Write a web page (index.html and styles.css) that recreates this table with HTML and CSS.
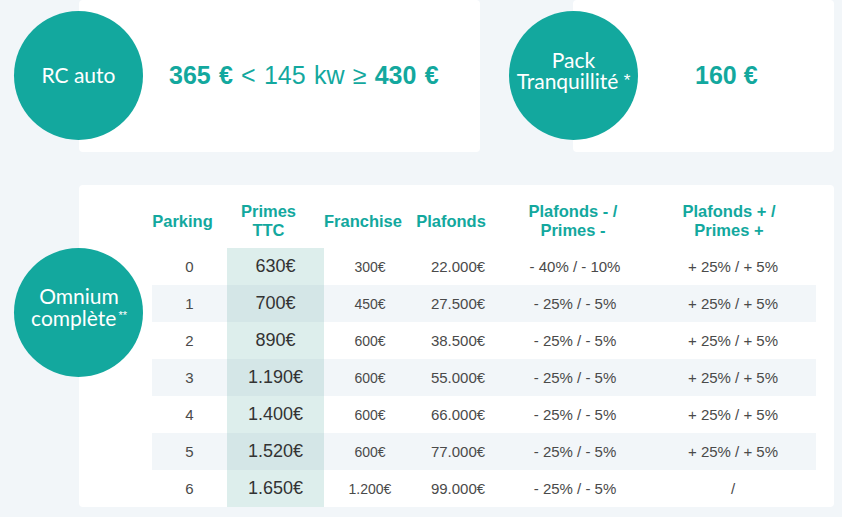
FILE: index.html
```html
<!DOCTYPE html>
<html lang="fr">
<head>
<meta charset="utf-8">
<title>Tarifs</title>
<link rel="stylesheet" href="styles.css">
</head>
<body>
<div class="page">
  <div class="top">
    <div class="card card-rc">
      <div class="circle circle-rc"><span class="label">RC auto</span></div>
      <p class="price price-rc"><b>365 €</b> &lt; 145 kw ≥ <b>430 €</b></p>
    </div>
    <div class="card card-pack">
      <div class="circle circle-pack"><span class="label">Pack<br>Tranquillité <span class="star">*</span></span></div>
      <p class="price"><b>160 €</b></p>
    </div>
  </div>
  <div class="card card-omnium">
    <div class="circle circle-omnium"><span class="label">Omnium<br>complète<sup>**</sup></span></div>
    <table class="rates">
      <colgroup>
        <col class="c1"><col class="c2"><col class="c3"><col class="c4"><col class="c5"><col class="c6">
      </colgroup>
      <thead>
        <tr>
          <th class="h1">Parking</th>
          <th class="h2">Primes<br>TTC</th>
          <th class="h3">Franchise</th>
          <th class="h4">Plafonds</th>
          <th class="h5">Plafonds - /<br>Primes -</th>
          <th class="h6">Plafonds + /<br>Primes +</th>
        </tr>
      </thead>
      <tbody>
        <tr><td>0</td><td class="primes">630€</td><td class="fr">300€</td><td>22.000€</td><td>- 40% / - 10%</td><td>+ 25% / + 5%</td></tr>
        <tr class="alt"><td>1</td><td class="primes">700€</td><td class="fr">450€</td><td>27.500€</td><td>- 25% / - 5%</td><td>+ 25% / + 5%</td></tr>
        <tr><td>2</td><td class="primes">890€</td><td class="fr">600€</td><td>38.500€</td><td>- 25% / - 5%</td><td>+ 25% / + 5%</td></tr>
        <tr class="alt"><td>3</td><td class="primes">1.190€</td><td class="fr">600€</td><td>55.000€</td><td>- 25% / - 5%</td><td>+ 25% / + 5%</td></tr>
        <tr><td>4</td><td class="primes">1.400€</td><td class="fr">600€</td><td>66.000€</td><td>- 25% / - 5%</td><td>+ 25% / + 5%</td></tr>
        <tr class="alt"><td>5</td><td class="primes">1.520€</td><td class="fr">600€</td><td>77.000€</td><td>- 25% / - 5%</td><td>+ 25% / + 5%</td></tr>
        <tr><td>6</td><td class="primes">1.650€</td><td class="fr small">1.200€</td><td>99.000€</td><td>- 25% / - 5%</td><td>/</td></tr>
      </tbody>
    </table>
  </div>
</div>
</body>
</html>
```

FILE: styles.css
```css
html, body {
  margin: 0;
  padding: 0;
  background: #f2f6f9;
}

body {
  font-family: "Liberation Sans", Arial, sans-serif;
  color: #444;
}

.page {
  width: 842px;
  height: 517px;
  overflow: hidden;
}

.top {
  display: flex;
  gap: 93px;
  padding-left: 79px;
  height: 152px;
}

.card {
  position: relative;
  background: #fff;
  border-radius: 4px;
}

.card-rc {
  width: 401px;
  display: flex;
  align-items: center;
  padding-left: 90px;
  padding-bottom: 2px;
  box-sizing: border-box;
}

.card-pack {
  width: 261px;
  display: flex;
  align-items: center;
  padding-left: 122px;
  padding-bottom: 2px;
  box-sizing: border-box;
}

.price {
  margin: 0;
  color: #13a89e;
  font-size: 25px;
  line-height: 30px;
  white-space: nowrap;
}

.price-rc {
  word-spacing: 1.3px;
}

.price b {
  font-weight: 700;
}

.circle {
  position: absolute;
  width: 129px;
  height: 129px;
  border-radius: 50%;
  background: #13a89e;
  color: #fff;
  font-family: Lato, "Liberation Sans", sans-serif;
  font-size: 21px;
  line-height: 22px;
  display: flex;
  align-items: center;
  justify-content: center;
  text-align: center;
}

.label {
  display: block;
}

.circle-rc {
  left: -65px;
  top: 11px;
  padding-bottom: 1px;
  box-sizing: border-box;
}

.circle-pack {
  left: -64px;
  top: 11px;
  line-height: 21px;
  padding-bottom: 9px;
  box-sizing: border-box;
}

.star {
  font-family: "Liberation Sans", Arial, sans-serif;
  font-size: 17px;
  position: relative;
  top: -3px;
}

.circle-omnium {
  left: -65px;
  top: 63px;
  padding-left: 1px;
  padding-bottom: 11px;
  box-sizing: border-box;
}

.circle-omnium sup {
  font-family: "Liberation Sans", Arial, sans-serif;
  font-size: 11px;
  line-height: 0;
  vertical-align: 7px;
  margin-left: 2px;
}

.card-omnium {
  margin: 33px 0 0 79px;
  width: 755px;
  height: 322px;
  padding-left: 73px;
  box-sizing: border-box;
}

.rates {
  width: 664px;
  table-layout: fixed;
  border-collapse: collapse;
  border-spacing: 0;
}

.c1 { width: 75px; }
.c2 { width: 97px; }
.c3 { width: 92px; }
.c4 { width: 84px; }
.c5 { width: 150px; }
.c6 { width: 166px; }

.rates th {
  color: #13a89e;
  font-size: 16.5px;
  font-weight: 700;
  line-height: 19px;
  padding: 17px 0 8px 0;
  height: 38px;
  text-align: center;
  vertical-align: middle;
  white-space: nowrap;
}

.rates th.h1,
.rates th.h2,
.rates th.h3,
.rates th.h4 {
  padding-right: 14px;
}

.rates th.h5 {
  padding-right: 4px;
}

.rates th.h6 {
  padding-right: 8px;
}

.rates td {
  height: 37px;
  padding: 0;
  text-align: center;
  vertical-align: middle;
  font-size: 15px;
  color: #4a4a4a;
  white-space: nowrap;
}

.rates tr.alt td {
  background: #f2f6f9;
}

.rates td.primes {
  background: #ddeeec;
  font-size: 18px;
  color: #333;
}

.rates tr.alt td.primes {
  background: #d4e6e7;
}

.rates td.fr {
  font-size: 14px;
}

.rates td.small {
  font-size: 14px;
}
```
